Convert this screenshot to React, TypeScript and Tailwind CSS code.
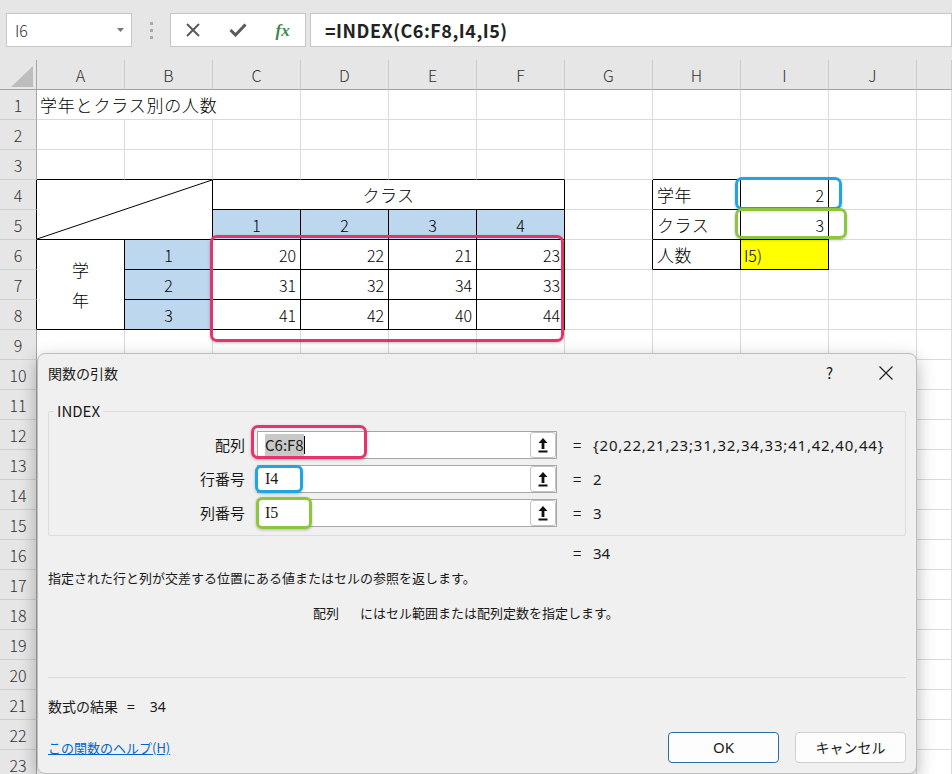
import React from 'react';

const GL = 'border-r border-b border-[#dadada]';
const TB = 'border-r border-b border-black';
const B3 = 'border-r border-b border-r-[#dadada] border-b-black';
const GR = 'border-r border-b border-r-black border-b-[#dadada]';
const BLUE = 'border-r border-b border-black bg-[#bdd7ee] flex items-center justify-center';
const NUM = 'border-r border-b border-black flex items-center justify-end pr-[4px]';
const LEFT = 'border-r border-b border-black flex items-center pl-[4px] text-[17px] tracking-[0.5px]';

type Cell = { t?: React.ReactNode; c: string };
type Row = { dark?: boolean; cells: Cell[] };

const empty = (k: number): Cell[] => Array.from({ length: k }, () => ({ c: GL }));

const Diagonal = () => (
  <svg className="absolute inset-0 h-full w-full" viewBox="0 0 100 100" preserveAspectRatio="none">
    <line x1="0" y1="100" x2="100" y2="0" stroke="#000" strokeWidth="1" vectorEffect="non-scaling-stroke" />
  </svg>
);

const rows: Row[] = [
  { cells: [{ t: '学年とクラス別の人数', c: 'col-span-3 border-r border-b border-[#dadada] flex items-center pl-[3px] whitespace-nowrap text-[17px] tracking-[0.8px]' }, ...empty(8)] },
  { cells: empty(11) },
  { cells: [{ c: B3 }, { c: B3 }, { c: B3 }, { c: B3 }, { c: B3 }, { c: B3 }, { c: GL }, { c: B3 }, { c: B3 }, { c: GL }, { c: GL }] },
  {
    dark: true,
    cells: [
      { t: <Diagonal />, c: 'col-span-2 row-span-2 relative border-r border-b border-black' },
      { t: 'クラス', c: 'col-span-4 border-r border-b border-black flex items-center justify-center text-[17px] tracking-[0.5px]' },
      { c: GR },
      { t: '学年', c: LEFT },
      { t: '2', c: NUM },
      { c: GL },
      { c: GL },
    ],
  },
  {
    dark: true,
    cells: [
      { t: '1', c: BLUE },
      { t: '2', c: BLUE },
      { t: '3', c: BLUE },
      { t: '4', c: BLUE },
      { c: GR },
      { t: 'クラス', c: LEFT },
      { t: '3', c: NUM },
      { c: GL },
      { c: GL },
    ],
  },
  {
    dark: true,
    cells: [
      { t: <><span>学</span><span>年</span></>, c: 'row-span-3 border-r border-b border-black flex flex-col items-center justify-center leading-[30px] text-[17px]' },
      { t: '1', c: BLUE },
      { t: '20', c: NUM },
      { t: '22', c: NUM },
      { t: '21', c: NUM },
      { t: '23', c: NUM },
      { c: GR },
      { t: '人数', c: LEFT },
      { t: 'I5)', c: 'border-r border-b border-black bg-[#ffff00] flex items-center pl-[3px]' },
      { c: GL },
      { c: GL },
    ],
  },
  {
    dark: true,
    cells: [{ t: '2', c: BLUE }, { t: '31', c: NUM }, { t: '32', c: NUM }, { t: '34', c: NUM }, { t: '33', c: NUM }, ...empty(5)],
  },
  {
    dark: true,
    cells: [{ t: '3', c: BLUE }, { t: '41', c: NUM }, { t: '42', c: NUM }, { t: '40', c: NUM }, { t: '44', c: NUM }, ...empty(5)],
  },
  ...Array.from({ length: 15 }, () => ({ cells: empty(11) })),
];

const cols = ['A', 'B', 'C', 'D', 'E', 'F', 'G', 'H', 'I', 'J', ''];

const ArrowBtn = () => (
  <div className="ml-auto h-full w-[26px] border border-[#c4c4c4] rounded-[3px] bg-white flex items-center justify-center">
    <svg width="10" height="15" viewBox="0 0 10 15">
      <path d="M5 0 L9.5 5 L6.4 5 L6.4 11 L3.6 11 L3.6 5 L0.5 5 Z" fill="#111" />
      <rect x="0.5" y="12.5" width="9" height="2" fill="#111" />
    </svg>
  </div>
);

const Field = ({ label, value, result }: { label: string; value: React.ReactNode; result: string }) => (
  <div className="flex items-center h-[28px]">
    <div className="w-[196px] text-right text-[15px]">{label}</div>
    <div className="ml-[12px] w-[300px] h-[28px] bg-white border border-[#a6a6a6] flex items-center pl-[7px] text-[15px]">
      {value}
      <ArrowBtn />
    </div>
    <div className="ml-[16px] w-[8px] text-center text-[15px]">=</div>
    <div className="ml-[12px] text-[15px] font-['Noto_Sans',sans-serif] tracking-[0.8px]">{result}</div>
  </div>
);

const Frame = ({ cls }: { cls: string }) => <div className={cls} />;

export default function App() {
  return (
    <div className="relative w-[952px] h-[774px] overflow-hidden bg-white text-black font-['Noto_Sans_CJK_JP',sans-serif]">
      {/* formula bar */}
      <div className="h-[60px] bg-[#e6e6e6] flex items-start pt-[13px] pl-[6px]">
        <div className="w-[126px] h-[34px] bg-white border border-[#c6c6c6] flex items-center justify-between pl-[8px] pr-[7px]">
          <span className="text-[16px] text-[#333] font-light">I6</span>
          <svg width="7" height="4" viewBox="0 0 7 4"><path d="M0 0 H7 L3.5 4 Z" fill="#777" /></svg>
        </div>
        <div className="w-[38px] h-[34px] flex flex-col items-center justify-center gap-[4px]">
          <span className="w-[3px] h-[3px] bg-[#aaa]" />
          <span className="w-[3px] h-[3px] bg-[#aaa]" />
          <span className="w-[3px] h-[3px] bg-[#aaa]" />
        </div>
        <div className="w-[136px] h-[34px] bg-white border border-[#c6c6c6] flex items-center">
          <div className="w-[45px] flex justify-center">
            <svg width="14" height="14" viewBox="0 0 14 14"><path d="M1 1 L13 13 M13 1 L1 13" stroke="#5a5a5a" strokeWidth="2" /></svg>
          </div>
          <div className="w-[45px] flex justify-center">
            <svg width="18" height="14" viewBox="0 0 18 14"><path d="M1.5 7 L6.5 12 L16.5 1.5" stroke="#5a5a5a" strokeWidth="3" fill="none" /></svg>
          </div>
          <div className="w-[45px] flex justify-center font-['Liberation_Serif',serif] italic font-bold text-[17px] text-[#3b8a4e] leading-none">fx</div>
        </div>
        <div className="ml-[4px] flex-1 h-[34px] bg-white border border-[#c6c6c6] flex items-center pl-[14px] text-[18px] font-semibold tracking-[0.5px] text-[#222]">
          =INDEX(C6:F8,I4,I5)
        </div>
      </div>

      {/* sheet */}
      <div className="grid grid-cols-[37px_repeat(10,88px)_35px] auto-rows-[30px] text-[16px] font-light">
        <div className="bg-[#e6e6e6] border-r border-b border-r-[#a6a6a6] border-b-[#a0a0a0] relative">
          <svg className="absolute left-[11px] top-[6px]" width="22" height="21" viewBox="0 0 22 21"><path d="M22 0 V21 H0 Z" fill="#bdbdbd" /></svg>
        </div>
        {cols.map((l, i) => (
          <div key={i} className="bg-[#e6e6e6] border-r border-b border-r-[#cacaca] border-b-[#a0a0a0] flex items-center justify-center text-[#333]">
            {l}
          </div>
        ))}
        {rows.map((r, i) => (
          <React.Fragment key={i}>
            <div className={r.dark ? 'bg-[#e6e6e6] border-r border-b border-r-black border-b-[#cfcfcf] flex items-center justify-center text-[#333]' : 'bg-[#e6e6e6] border-r border-b border-r-[#a6a6a6] border-b-[#cfcfcf] flex items-center justify-center text-[#333]'}>
              {i + 1}
            </div>
            {r.cells.map((c, j) => (
              <div key={j} className={c.c}>{c.t}</div>
            ))}
          </React.Fragment>
        ))}
      </div>

      {/* highlight frames on the sheet */}
      <Frame cls="absolute left-[210px] top-[235px] w-[354px] h-[107px] border-[3px] border-[#e6336c] rounded-[7px] shadow-[0_1px_3px_rgba(0,0,0,0.25)]" />
      <Frame cls="absolute left-[735px] top-[177px] w-[107px] h-[33px] border-[3px] border-[#1fa5e0] rounded-[7px] shadow-[0_1px_3px_rgba(0,0,0,0.25)]" />
      <Frame cls="absolute left-[735px] top-[208px] w-[112px] h-[31px] border-[3px] border-[#8cc63f] rounded-[7px] shadow-[0_1px_3px_rgba(0,0,0,0.25)]" />

      {/* dialog */}
      <div className="absolute left-[37px] top-[353px] w-[880px] h-[421px] bg-[#f0f0f0] border border-[#bdbdbd] rounded-[8px] shadow-[0_6px_18px_rgba(0,0,0,0.3)] flex flex-col text-[#1a1a1a]">
        <div className="h-[38px] flex items-center pl-[10px] pr-[23px] text-[14px]">
          <span>関数の引数</span>
          <span className="ml-auto mr-[46px] text-[15px]">?</span>
          <svg width="14" height="14" viewBox="0 0 14 14"><path d="M0.5 0.5 L13.5 13.5 M13.5 0.5 L0.5 13.5" stroke="#222" strokeWidth="1.2" /></svg>
        </div>
        <fieldset className="mx-[10px] mt-[9px] h-[135px] border border-[#dcdcdc] rounded-[2px] pt-[10px]">
          <legend className="ml-[5px] px-[3px] text-[15px] leading-[20px]">INDEX</legend>
          <div className="flex flex-col gap-[6px]">
            <Field
              label="配列"
              value={<><span className="bg-[#c8c8c8]">C6:F8</span><span className="w-px h-[18px] bg-black" /></>}
              result="{20,22,21,23;31,32,34,33;41,42,40,44}"
            />
            <Field label="行番号" value={<span className="font-['Liberation_Serif',serif] text-[16px]">I4</span>} result="2" />
            <Field label="列番号" value={<span className="font-['Liberation_Serif',serif] text-[16px]">I5</span>} result="3" />
          </div>
        </fieldset>
        <div className="mt-[7px] h-[20px] flex items-center pl-[535px] text-[15px]">
          <span className="w-[8px] text-center">=</span>
          <span className="ml-[12px] font-['Noto_Sans',sans-serif]">34</span>
        </div>
        <div className="mt-[5px] h-[20px] pl-[10px] text-[13px] leading-[20px]">指定された行と列が交差する位置にある値またはセルの参照を返します。</div>
        <div className="mt-[15px] h-[20px] pl-[275px] text-[13px] leading-[20px] flex">
          <span>配列</span>
          <span className="ml-[21px]">にはセル範囲または配列定数を指定します。</span>
        </div>
        <div className="mt-[54px] mx-[10px] h-px bg-[#d8d8d8]" />
        <div className="mt-[18px] h-[20px] pl-[10px] flex items-center text-[14px]">
          <span>数式の結果</span>
          <span className="ml-[9px]">=</span>
          <span className="ml-[15px] font-['Noto_Sans',sans-serif]">34</span>
        </div>
        <div className="mt-[16px] h-[31px] flex items-center pl-[10px] pr-[10px]">
          <span className="text-[13px] text-[#0066cc] underline">この関数のヘルプ(H)</span>
          <button className="ml-auto w-[111px] h-[31px] border border-[#2a6e9e] rounded-[4px] bg-[#fdfdfd] text-[15px] font-['Noto_Sans',sans-serif]">OK</button>
          <button className="ml-[16px] w-[111px] h-[31px] border border-[#cfcfcf] rounded-[4px] bg-[#fdfdfd] text-[14px]">キャンセル</button>
        </div>
      </div>

      {/* highlight frames in the dialog */}
      <Frame cls="absolute left-[251px] top-[425px] w-[116px] h-[34px] border-[3px] border-[#e6336c] rounded-[7px] shadow-[0_1px_3px_rgba(0,0,0,0.25)]" />
      <Frame cls="absolute left-[255px] top-[465px] w-[48px] h-[28px] border-[3px] border-[#1fa5e0] rounded-[6px] shadow-[0_1px_3px_rgba(0,0,0,0.25)]" />
      <Frame cls="absolute left-[256px] top-[497px] w-[56px] h-[32px] border-[3px] border-[#8cc63f] rounded-[6px] shadow-[0_1px_3px_rgba(0,0,0,0.25)]" />
    </div>
  );
}
